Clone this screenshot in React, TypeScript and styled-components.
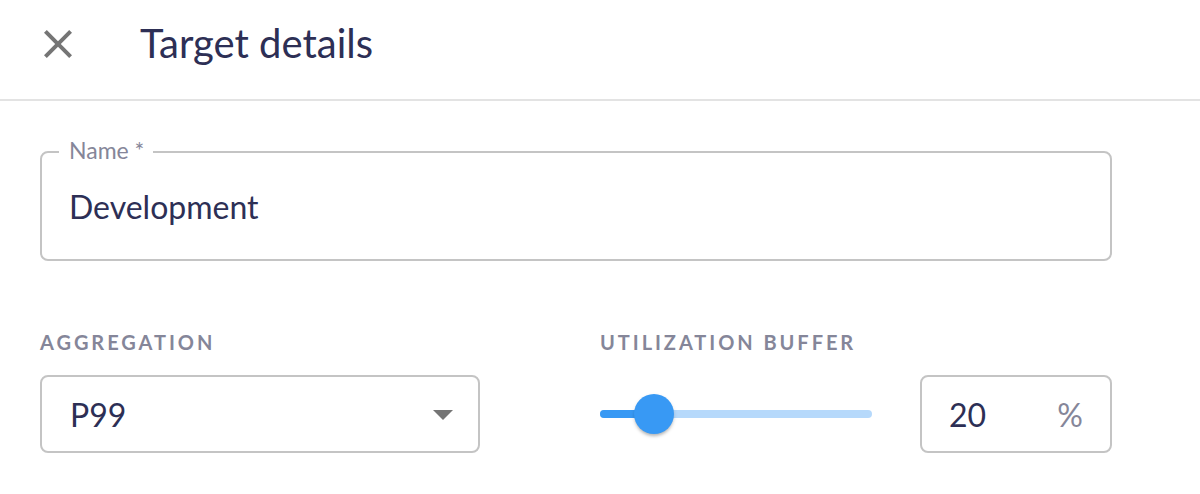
import React from "react";
import styled, { createGlobalStyle } from "styled-components";

const Global = createGlobalStyle`
  html, body { margin: 0; padding: 0; background: #ffffff; }
  body { font-family: Lato, "Noto Sans", sans-serif; color: #2d2f55; }
  * { box-sizing: border-box; }
`;

const Page = styled.div`
  width: 1200px;
  height: 494px;
  background: #fff;
  overflow: hidden;
`;

const Header = styled.header`
  height: 101px;
  border-bottom: 2px solid #e3e3e3;
  display: flex;
  align-items: flex-start;
  padding: 20px 0 0 34px;
  gap: 58px;
`;

const IconButton = styled.button`
  width: 48px;
  height: 48px;
  padding: 0;
  border: none;
  background: none;
  display: flex;
  align-items: center;
  justify-content: center;
  color: #757575;
  cursor: pointer;
`;

const Title = styled.h1`
  margin: -1px 0 0;
  font-size: 40px;
  line-height: 48px;
  font-weight: 400;
  color: #2d2f55;
`;

const Form = styled.div`
  padding: 50px 88px 0 40px;
`;

const OutlinedBox = styled.div<{ $h: number }>`
  position: relative;
  height: ${(p) => p.$h}px;
  border: 2px solid #c4c4c4;
  border-radius: 8px;
  display: flex;
  align-items: center;
  font-size: 32px;
  color: #2d2f55;
`;

const NameBox = styled(OutlinedBox)`
  padding: 0 27px;
`;

const FloatingLabel = styled.span`
  position: absolute;
  top: -17px;
  left: 17px;
  padding: 0 9px 0 10px;
  background: #fff;
  font-size: 23px;
  line-height: 28px;
  color: #858699;
`;

const Row = styled.div`
  margin-top: 69px;
  display: grid;
  grid-template-columns: 440px 512px;
  column-gap: 120px;
`;

const Field = styled.div`
  display: flex;
  flex-direction: column;
  gap: 21px;
`;

const Overline = styled.div`
  font-size: 20px;
  line-height: 24px;
  font-weight: 700;
  letter-spacing: 2.95px;
  color: #858699;
  text-transform: uppercase;
`;

const SelectBox = styled(OutlinedBox)`
  padding: 0 11px 0 28px;
  justify-content: space-between;
`;

const SliderRow = styled.div`
  display: flex;
  align-items: center;
  gap: 48px;
`;

const Track = styled.div`
  position: relative;
  width: 272px;
  height: 8px;
  border-radius: 4px;
  background: #b6d9fb;
`;

const TrackFill = styled.div`
  position: absolute;
  left: 0;
  top: 0;
  bottom: 0;
  border-radius: 4px;
  background: #3899f4;
`;

const Thumb = styled.div`
  position: absolute;
  top: 50%;
  width: 40px;
  height: 40px;
  margin: -20px 0 0 -20px;
  border-radius: 50%;
  background: #3899f4;
  box-shadow: 0 3px 3px -1px rgba(0, 0, 0, 0.2), 0 2px 4px rgba(0, 0, 0, 0.12);
`;

const NumberBox = styled(OutlinedBox)`
  width: 192px;
  padding: 0 27px;
  justify-content: space-between;
`;

const Unit = styled.span`
  color: #858699;
`;

const CloseIcon = () => (
  <svg width="48" height="48" viewBox="0 0 24 24" fill="currentColor">
    <path d="M19 6.41 17.59 5 12 10.59 6.41 5 5 6.41 10.59 12 5 17.59 6.41 19 12 13.41 17.59 19 19 17.59 13.41 12z" />
  </svg>
);

const ArrowDrop = () => (
  <svg width="48" height="48" viewBox="0 0 24 24" fill="#757575">
    <path d="M7 10l5 5 5-5z" />
  </svg>
);

export default function App() {
  const value = 20;
  return (
    <Page>
      <Global />
      <Header>
        <IconButton aria-label="close">
          <CloseIcon />
        </IconButton>
        <Title>Target details</Title>
      </Header>
      <Form>
        <NameBox $h={110}>
          <FloatingLabel>Name *</FloatingLabel>
          Development
        </NameBox>
        <Row>
          <Field>
            <Overline>Aggregation</Overline>
            <SelectBox $h={78}>
              P99
              <ArrowDrop />
            </SelectBox>
          </Field>
          <Field>
            <Overline>Utilization buffer</Overline>
            <SliderRow>
              <Track>
                <TrackFill style={{ width: `${value}%` }} />
                <Thumb style={{ left: `${value}%` }} />
              </Track>
              <NumberBox $h={78}>
                20
                <Unit>%</Unit>
              </NumberBox>
            </SliderRow>
          </Field>
        </Row>
      </Form>
    </Page>
  );
}
